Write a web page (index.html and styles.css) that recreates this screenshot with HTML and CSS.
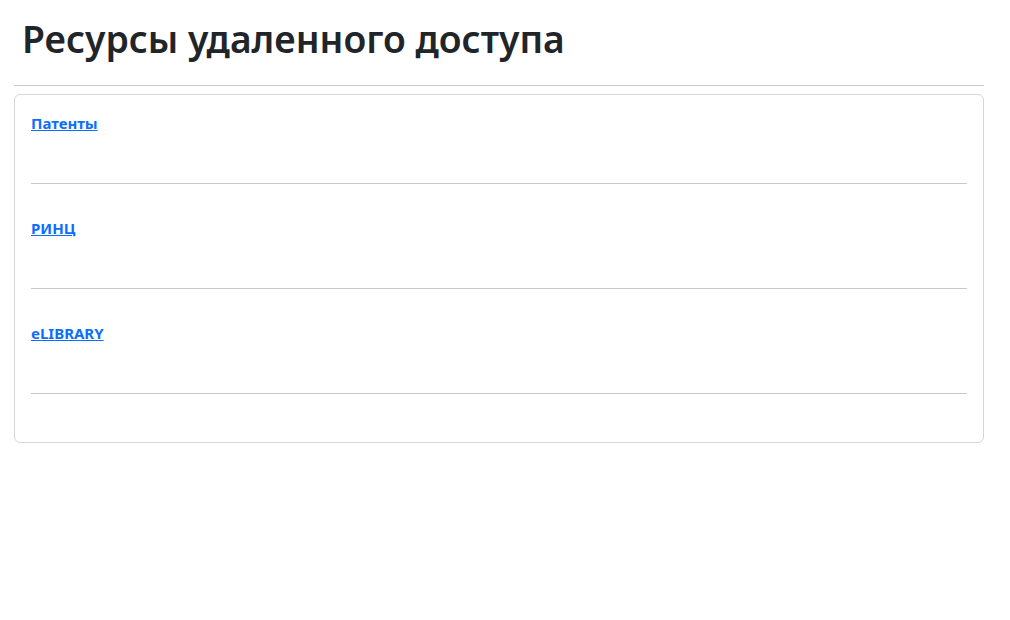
FILE: index.html
```html
<!DOCTYPE html>
<html lang="ru">
<head>
  <meta charset="UTF-8" />
  <meta name="viewport" content="width=device-width, initial-scale=1.0"/>
  <title>Ресурсы удаленного доступа</title>
  <link rel="stylesheet" href="styles.css">
</head>
<body>
  <div class="page">
    <h1>Ресурсы удаленного доступа</h1>
    <hr class="divider">

    <div class="card">
      <div class="resource">
        <a class="resource-link" href="#">Патенты</a>
        <hr>
      </div>
      <div class="resource">
        <a class="resource-link" href="#">РИНЦ</a>
        <hr>
      </div>
      <div class="resource">
        <a class="resource-link" href="#">eLIBRARY</a>
        <hr>
      </div>
    </div>
  </div>
</body>
</html>
```

FILE: styles.css
```css
body {
  font-family: 'Noto Sans', 'Open Sans', sans-serif;
  font-size: 16px;
  line-height: 1.5;
  color: #212529;
  background-color: #fff;
  margin: 0;
}
.page {
  width: 970px;
  padding: 16px 14px;
}
h1 {
  font-size: 37.3px;
  font-weight: 600;
  line-height: 45px;
  margin: 0 0 24px;
  padding-left: 8px;
}
hr {
  border: 0;
  border-top: 1px solid #c8c9ca;
  margin: 0;
}
.divider {
  margin-bottom: 8px;
}
.card {
  border: 1px solid #d6d7d8;
  border-radius: 6px;
  padding: 16px;
}
.resource {
  padding-bottom: 16px;
}
.resource-link {
  display: inline-block;
  margin-bottom: 48px;
  font-size: 15px;
  font-weight: 700;
  line-height: 24px;
  color: #0d6efd;
}
.resource hr {
  margin-bottom: 16px;
}
```
